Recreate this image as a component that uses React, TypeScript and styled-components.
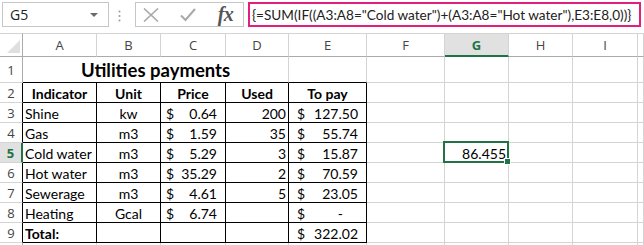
import styled, {createGlobalStyle, css} from "styled-components";

const GREEN = "#217346";
const GRID = "#d4d4d4";

const GlobalStyle = createGlobalStyle`
  html, body {
    margin: 0;
    padding: 0;
    background: #fff;
    overflow: hidden;
  }
`

const Window = styled.div`
  width: 644px;
  height: 245px;
  overflow: hidden;
  display: flex;
  flex-direction: column;
  font-family: "Lato", "Liberation Sans", sans-serif;
  color: #000;
`

const FormulaBar = styled.div`
  display: flex;
  align-items: flex-start;
  height: 33px;
  padding: 2px 3px 0 2px;
  box-sizing: border-box;
  flex-shrink: 0;
`

const NameBox = styled.div`
  width: 107px;
  height: 25px;
  box-sizing: border-box;
  border: 1px solid #c6c6c6;
  display: flex;
  align-items: center;
  justify-content: space-between;
  padding: 0 10px 0 7px;
  font-family: "Open Sans", "Noto Sans", sans-serif;
  font-size: 14px;
  color: #222;
`

const Caret = styled.span`
  width: 0;
  height: 0;
  border-left: 4px solid transparent;
  border-right: 4px solid transparent;
  border-top: 4px solid #6a6a6a;
`

const Grip = styled.svg`
  margin: 8px 0 0 9px;
  flex-shrink: 0;
`

const ButtonGroup = styled.div`
  margin-left: 14px;
  width: 109px;
  height: 25px;
  box-sizing: border-box;
  border: 1px solid #c6c6c6;
  display: grid;
  grid-template-columns: 29px 45px 31px;
  align-items: center;
  justify-items: center;
`

const FxLabel = styled.span`
  font-family: "Liberation Serif", "DejaVu Serif", serif;
  font-style: italic;
  font-weight: bold;
  font-size: 20px;
  color: #555;
  letter-spacing: -0.5px;
  line-height: 1;
  margin-top: -2px;
`

const FormulaInput = styled.div`
  margin-left: 4px;
  flex: 1;
  height: 25px;
  box-sizing: border-box;
  border: 2px solid #e2207c;
  display: flex;
  align-items: center;
  padding-left: 2px;
  font-size: 13.6px;
  color: #222;
  white-space: nowrap;
  overflow: hidden;
`

const Sheet = styled.div`
  display: grid;
  grid-template-columns: 23px 74px 64px 65px 63px 78px 78px 64px 64px 65px 1fr;
  grid-template-rows: 24px 26px repeat(9, 20px);
`

const Corner = styled.div`
  position: relative;
  border-right: 1px solid #ababab;
  border-bottom: 1px solid #ababab;
  border-top: 1px solid ${GRID};
  box-sizing: border-box;

  &::after {
    content: "";
    position: absolute;
    right: 2px;
    bottom: 3px;
    width: 0;
    height: 0;
    border-left: 13px solid transparent;
    border-bottom: 13px solid #dfdfdf;
  }
`

const ColHeader = styled.div<{ $active?: boolean }>`
  box-sizing: border-box;
  border-top: 1px solid ${GRID};
  border-right: 1px solid ${GRID};
  border-bottom: 1px solid #ababab;
  display: flex;
  align-items: center;
  justify-content: center;
  font-family: "Open Sans", "Noto Sans", sans-serif;
  font-size: 13px;
  color: #444;

  ${p => p.$active && css`
    background: #e1e1e1;
    border-bottom: 2px solid ${GREEN};
    color: ${GREEN};
    font-weight: bold;
  `}
`

const RowHeader = styled.div<{ $active?: boolean; $edge?: boolean }>`
  box-sizing: border-box;
  border-right: 1px solid ${p => p.$edge ? "#000" : "#ababab"};
  border-bottom: 1px solid ${GRID};
  display: flex;
  align-items: center;
  justify-content: center;
  font-family: "Open Sans", "Noto Sans", sans-serif;
  font-size: 13px;
  color: #444;

  ${p => p.$active && css`
    background: #e1e1e1;
    border-right: 2px solid ${GREEN};
    color: ${GREEN};
    font-weight: bold;
  `}
`

const Cell = styled.div<{
    $align?: "left" | "center" | "right";
    $bold?: boolean;
    $boxRight?: boolean;
    $boxBottom?: boolean;
    $span?: number;
    $selected?: boolean;
}>`
  position: relative;
  box-sizing: border-box;
  min-width: 0;
  border-right: 1px solid ${p => p.$boxRight ? "#000" : GRID};
  border-bottom: 1px solid ${p => p.$boxBottom ? "#000" : GRID};
  display: flex;
  align-items: flex-end;
  justify-content: ${p => p.$align === "center" ? "center" : p.$align === "right" ? "flex-end" : "flex-start"};
  padding: 0 2px;
  font-size: 14px;
  font-weight: ${p => p.$bold ? "bold" : "normal"};
  white-space: nowrap;
  ${p => p.$span && css`grid-column: span ${p.$span};`}

  ${p => p.$selected && css`
    &::after {
      content: "";
      position: absolute;
      left: -2px;
      top: -2px;
      right: -1px;
      bottom: -1px;
      border: 2px solid ${GREEN};
    }

    &::before {
      content: "";
      position: absolute;
      right: -3px;
      bottom: -3px;
      width: 5px;
      height: 5px;
      background: ${GREEN};
      border: 1px solid #fff;
      z-index: 1;
    }
  `}
`

const Title = styled(Cell)`
  font-size: 18.5px;
  font-weight: bold;
  padding-bottom: 1px;
`

const Money = styled(Cell)<{ $lead: number }>`
  justify-content: space-between;
  padding: 0 8px 0 ${p => p.$lead}px;
`

const Dash = styled.span`
  margin-right: 15px;
`

interface Row {
    name: string;
    unit: string;
    price: string;
    used: string;
    pay: string;
}

const rows: Row[] = [
    {name: "Shine", unit: "kw", price: "0.64", used: "200", pay: "127.50"},
    {name: "Gas", unit: "m3", price: "1.59", used: "35", pay: "55.74"},
    {name: "Cold water", unit: "m3", price: "5.29", used: "3", pay: "15.87"},
    {name: "Hot water", unit: "m3", price: "35.29", used: "2", pay: "70.59"},
    {name: "Sewerage", unit: "m3", price: "4.61", used: "5", pay: "23.05"},
    {name: "Heating", unit: "Gcal", price: "6.74", used: "", pay: "-"},
];

const columns = ["A", "B", "C", "D", "E", "F", "G", "H", "I", ""];

function Blanks({row}: { row: number }) {
    // F..J, with G5 holding the selected result
    return (
        <>
            <Cell/>
            {row === 5 ? <Cell $align="right" $selected>86.455</Cell> : <Cell/>}
            <Cell/>
            <Cell/>
            <Cell/>
        </>
    )
}

export default function App() {
    return (
        <Window>
            <GlobalStyle/>
            <FormulaBar>
                <NameBox>
                    <span>G5</span>
                    <Caret/>
                </NameBox>
                <Grip width="3" height="12" viewBox="0 0 3 12">
                    <circle cx="1.5" cy="1.5" r="1" fill="#9a9a9a"/>
                    <circle cx="1.5" cy="6" r="1" fill="#9a9a9a"/>
                    <circle cx="1.5" cy="10.5" r="1" fill="#9a9a9a"/>
                </Grip>
                <ButtonGroup>
                    <svg width="16" height="14" viewBox="0 0 16 14">
                        <path d="M1 0.5 L15 13.5 M15 0.5 L1 13.5" stroke="#a9a9a9" strokeWidth="1.6" fill="none"/>
                    </svg>
                    <svg width="16" height="14" viewBox="0 0 16 14">
                        <path d="M1 7.5 L5.5 12 L15 1" stroke="#a9a9a9" strokeWidth="2" fill="none"/>
                    </svg>
                    <FxLabel>fx</FxLabel>
                </ButtonGroup>
                <FormulaInput>
                    {'{=SUM(IF((A3:A8="Cold water")+(A3:A8="Hot water"),E3:E8,0))}'}
                </FormulaInput>
            </FormulaBar>

            <Sheet>
                <Corner/>
                {columns.map((c, i) => <ColHeader key={i} $active={c === "G"}>{c}</ColHeader>)}

                <RowHeader>1</RowHeader>
                <Title $span={4} $align="center" $boxBottom>Utilities payments</Title>
                <Cell $boxBottom/>
                <Blanks row={1}/>

                <RowHeader $edge>2</RowHeader>
                <Cell $align="center" $bold $boxRight $boxBottom>Indicator</Cell>
                <Cell $align="center" $bold $boxRight $boxBottom>Unit</Cell>
                <Cell $align="center" $bold $boxRight $boxBottom>Price</Cell>
                <Cell $align="center" $bold $boxRight $boxBottom>Used</Cell>
                <Cell $align="center" $bold $boxRight $boxBottom>To pay</Cell>
                <Blanks row={2}/>

                {rows.map((r, i) => (
                    <>
                        <RowHeader key={"h" + i} $edge={i !== 2} $active={i === 2}>{i + 3}</RowHeader>
                        <Cell $boxRight $boxBottom>{r.name}</Cell>
                        <Cell $align="center" $boxRight $boxBottom>{r.unit}</Cell>
                        <Money $lead={5} $boxRight $boxBottom><span>$</span><span>{r.price}</span></Money>
                        <Cell $align="right" $boxRight $boxBottom>{r.used}</Cell>
                        <Money $lead={8} $boxRight $boxBottom>
                            <span>$</span>
                            {r.pay === "-" ? <Dash>-</Dash> : <span>{r.pay}</span>}
                        </Money>
                        <Blanks row={i + 3}/>
                    </>
                ))}

                <RowHeader $edge>9</RowHeader>
                <Cell $bold $boxRight $boxBottom>Total:</Cell>
                <Cell $boxRight $boxBottom/>
                <Cell $boxRight $boxBottom/>
                <Cell $boxRight $boxBottom/>
                <Money $lead={8} $boxRight $boxBottom><span>$</span><span>322.02</span></Money>
                <Blanks row={9}/>

                <RowHeader>10</RowHeader>
                <Cell/>
                <Cell/>
                <Cell/>
                <Cell/>
                <Cell/>
                <Blanks row={10}/>
            </Sheet>
        </Window>
    )
}
